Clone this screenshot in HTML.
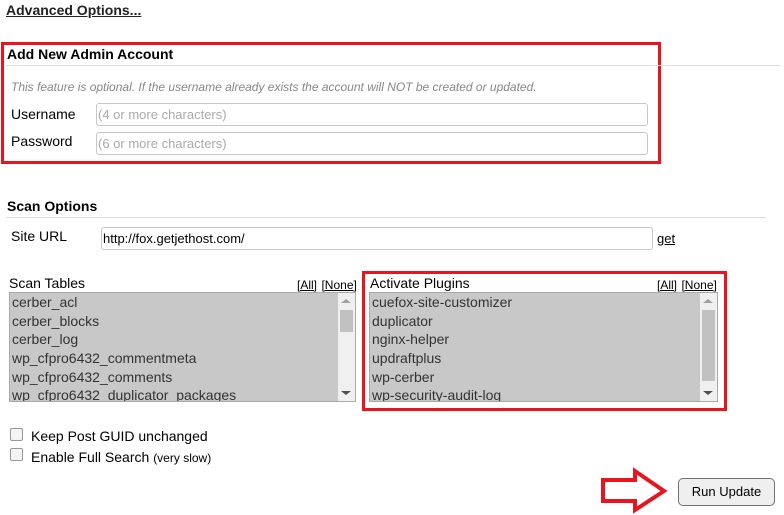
<!DOCTYPE html>
<html><head><meta charset="utf-8"><style>
body{margin:0;width:784px;height:515px;background:#fff;font-family:"Liberation Sans",sans-serif;color:#000;position:relative;overflow:hidden}
.a{position:absolute;white-space:nowrap}
.red{position:absolute;border:3px solid #e8151f;box-sizing:border-box}
.inp{position:absolute;border:1px solid #c8c8c8;border-radius:3px;box-sizing:border-box;font-size:13px;padding:3px 1px;background:#fff}
.hr{position:absolute;height:1px;background:#ddd}
.lb{position:absolute;background:#c8c8c8;border:1px solid #aaa;box-sizing:border-box;font-size:14px;color:#333;overflow:hidden}
.lb .r{height:18.7px;line-height:18px;padding-left:2px}
.sb{position:absolute;right:0;top:0;width:17px;height:100%;background:#f0f0f0}
.sb .th{position:absolute;left:2px;width:13px;background:#c1c1c1}
.ar{position:absolute;left:3px;width:0;height:0;border-left:5px solid transparent;border-right:5px solid transparent}
.lnk{color:#000;text-decoration:underline;font-size:12px}
.cb{position:absolute;width:11px;height:11px;border:1px solid #999;border-radius:2px;background:#f4f4f4}
</style></head><body>
<div class="a" style="left:6px;top:2px;font-size:14px;font-weight:bold;text-decoration:underline;color:#222">Advanced Options...</div>

<div class="red" style="left:1px;top:42px;width:660px;height:122px"></div>
<div class="a" style="left:7px;top:46px;font-size:14px;font-weight:bold">Add New Admin Account</div>
<div class="hr" style="left:6px;top:65px;width:774px"></div>
<div class="a" style="left:11px;top:80px;font-size:12px;font-style:italic;color:#888">This feature is optional. If the username already exists the account will NOT be created or updated.</div>
<div class="a" style="left:11px;top:106px;font-size:14px">Username</div>
<div class="inp" style="left:96px;top:103px;width:552px;height:23px;color:#aaa">(4 or more characters)</div>
<div class="a" style="left:11px;top:133px;font-size:14px">Password</div>
<div class="inp" style="left:96px;top:132px;width:552px;height:23px;color:#aaa">(6 or more characters)</div>

<div class="a" style="left:7px;top:198px;font-size:14px;font-weight:bold">Scan Options</div>
<div class="hr" style="left:6px;top:217px;width:760px"></div>
<div class="a" style="left:11px;top:228px;font-size:14px">Site URL</div>
<div class="inp" style="left:101px;top:227px;width:552px;height:23px;color:#000">http://fox.getjethost.com/</div>
<div class="a" style="left:657px;top:230px"><span class="lnk" style="font-size:13px">get</span></div>

<div class="a" style="left:9px;top:275px;font-size:14px">Scan Tables</div>
<div class="a" style="left:297px;top:276px"><span class="lnk">[All]</span> <span class="lnk">[None]</span></div>
<div class="lb" style="left:9px;top:292px;width:347px;height:110px">
<div class="r">cerber_acl</div><div class="r">cerber_blocks</div><div class="r">cerber_log</div><div class="r">wp_cfpro6432_commentmeta</div><div class="r">wp_cfpro6432_comments</div><div class="r">wp_cfpro6432_duplicator_packages</div>
<div class="sb"><div class="th" style="top:17px;height:22px"></div><div class="ar" style="top:6px;border-bottom:4px solid #a0a0a0"></div><div class="ar" style="bottom:6px;border-top:4px solid #505050"></div></div>
</div>

<div class="red" style="left:362px;top:271px;width:365px;height:140px"></div>
<div class="a" style="left:370px;top:275px;font-size:14px">Activate Plugins</div>
<div class="a" style="left:657px;top:276px"><span class="lnk">[All]</span> <span class="lnk">[None]</span></div>
<div class="lb" style="left:369px;top:292px;width:349px;height:110px">
<div class="r">cuefox-site-customizer</div><div class="r">duplicator</div><div class="r">nginx-helper</div><div class="r">updraftplus</div><div class="r">wp-cerber</div><div class="r">wp-security-audit-log</div>
<div class="sb"><div class="th" style="top:17px;height:71px"></div><div class="ar" style="top:6px;border-bottom:4px solid #a0a0a0"></div><div class="ar" style="bottom:6px;border-top:4px solid #505050"></div></div>
</div>

<div class="cb" style="left:10px;top:428px"></div>
<div class="a" style="left:31px;top:428px;font-size:14px">Keep Post GUID unchanged</div>
<div class="cb" style="left:10px;top:448px"></div>
<div class="a" style="left:31px;top:449px;font-size:14px">Enable Full Search <span style="font-size:12px">(very slow)</span></div>

<svg class="a" style="left:598px;top:467px" width="72" height="48"><polygon points="5,13 37,13 37,4 66,24 37,43 37,34 5,34" fill="none" stroke="#e8151f" stroke-width="4"/></svg>
<div class="a" style="left:678px;top:478px;width:97px;height:28px;box-sizing:border-box;border:1px solid #707070;border-radius:5px;background:#efefef;font-size:13px;text-align:center;line-height:26px">Run Update</div>
</body></html>
